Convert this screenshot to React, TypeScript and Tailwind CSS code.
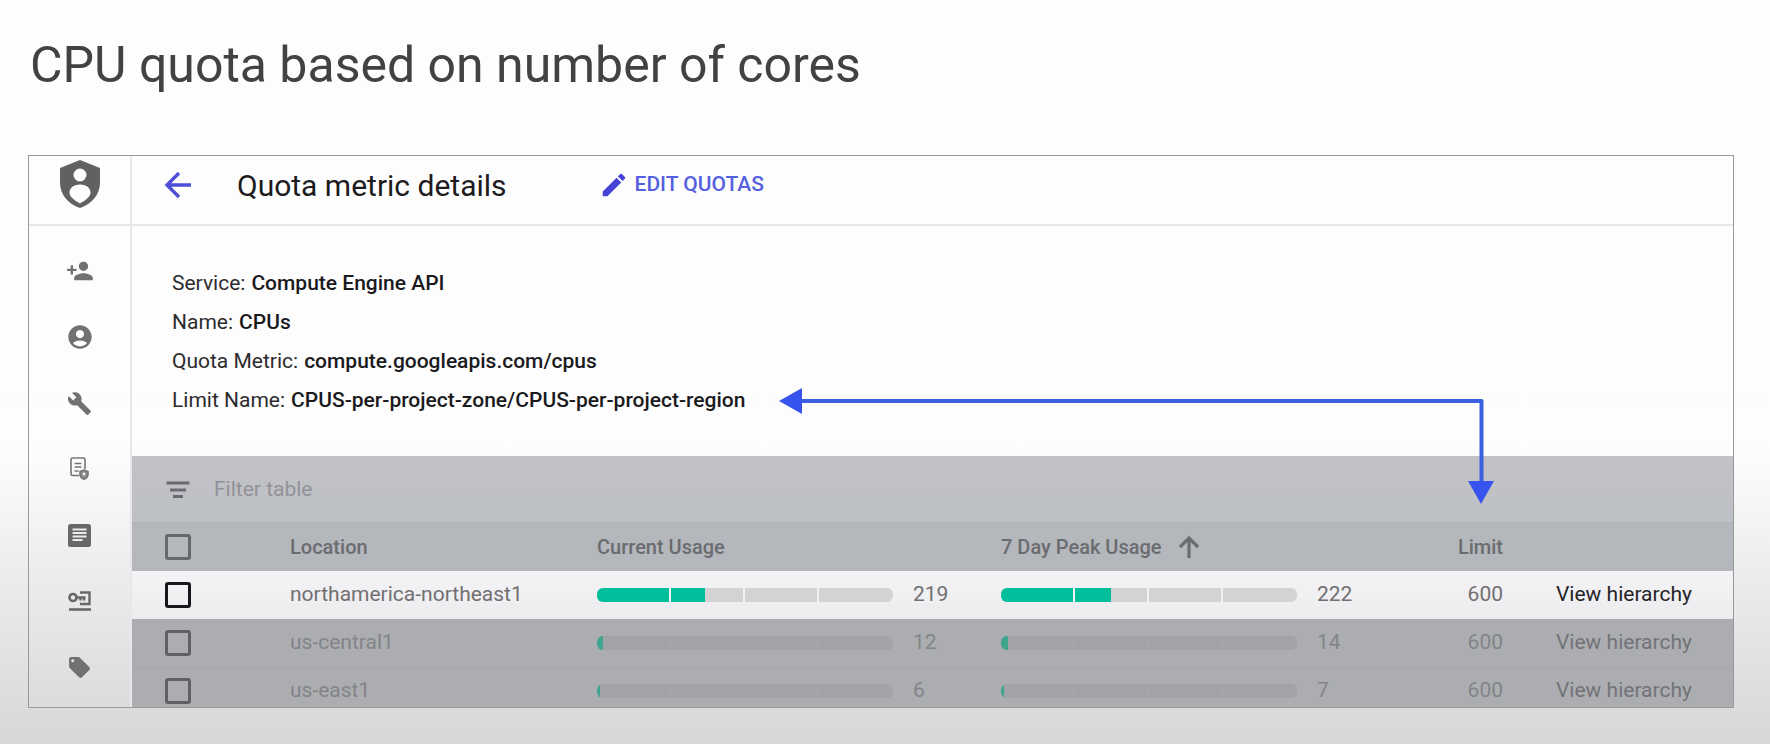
import type { ReactNode } from "react";
import { MdAccountCircle, MdBuild, MdEdit, MdLocalOffer, MdPersonAdd } from "react-icons/md";

function ShieldIcon() {
  return (
    <svg width="40" height="48" viewBox="0 0 40 48" aria-hidden="true">
      <path fill="#616063" fillRule="evenodd" d="M20 0 40 8V23C40 34 32 44 20 48 8 44 0 34 0 23V8ZM20 8.500a6.500 6.500 0 1 0 0 13 6.500 6.500 0 0 0 0-13ZM20 24.500C13 24.500 9.500 28.500 9.500 32.500 9.500 37 15 40.500 20 43.500 25 40.500 30.500 37 30.500 32.500 30.500 28.500 27 24.500 20 24.500Z" />
    </svg>
  );
}

function PolicyIcon() {
  return (
    <svg width="20" height="24" viewBox="0 0 20 24" fill="none" stroke="#757477" strokeWidth="1.600" aria-hidden="true">
      <path d="M9 18.500H2.500a1.500 1.500 0 0 1-1.500-1.500V2.500A1.500 1.500 0 0 1 2.500 1h11A1.500 1.500 0 0 1 15 2.500V12" />
      <path d="M4.500 6.500h7M4.500 10h7M4.500 14h4" />
      <path d="M14 13l4 1.500v3c0 2.200-1.700 3.800-4 4.700-2.300-.9-4-2.500-4-4.700v-3z" fill="#8b8a8d" />
      <circle cx="14" cy="17" r="1.400" fill="#eee" stroke="none" />
    </svg>
  );
}

function NotesIcon() {
  return (
    <svg width="23" height="23" viewBox="0 0 23 23" aria-hidden="true">
      <rect width="23" height="23" rx="2.500" fill="#68676a" />
      <path d="M4.500 5.500h14M4.500 9h14M4.500 12.500h14M4.500 16h10" stroke="#ececee" strokeWidth="1.800" />
    </svg>
  );
}

function KeyIcon() {
  return (
    <svg width="23" height="20" viewBox="0 0 23 20" fill="none" stroke="#69686b" aria-hidden="true">
      <circle cx="5" cy="6.500" r="3.500" strokeWidth="2.600" />
      <path d="M8 6.500h9.500M12.500 6.500v3M16 6.500v3" strokeWidth="2.400" />
      <path d="M12 1.500h9.500v11.500h-9.500" strokeWidth="2.400" />
      <path d="M1 18.500h22" strokeWidth="2.600" />
    </svg>
  );
}

function BackIcon() {
  return (
    <svg width="28" height="28" viewBox="0 0 28 28" fill="none" stroke="currentColor" strokeWidth="3.400" aria-hidden="true">
      <path d="M27 14H3.500M15 2 3 14 15 26" />
    </svg>
  );
}

function SortIcon() {
  return (
    <svg width="22" height="24" viewBox="0 0 22 24" fill="none" stroke="currentColor" strokeWidth="3.200" aria-hidden="true">
      <path d="M11 23V3M2 12 11 3 20 12" />
    </svg>
  );
}

function FilterIcon() {
  return (
    <svg width="24" height="18" viewBox="0 0 24 18" fill="none" stroke="#6a6b72" strokeWidth="3.200" aria-hidden="true">
      <path d="M0.500 2H23.500M4 9H20M7 15.500H17" />
    </svg>
  );
}

const navItems: { label: string; icon: ReactNode }[] = [
  { label: "Add member", icon: <MdPersonAdd size={28} /> },
  { label: "Identity", icon: <MdAccountCircle size={28} /> },
  { label: "Tools", icon: <MdBuild size={25} /> },
  { label: "Policies", icon: <PolicyIcon /> },
  { label: "Quotas", icon: <NotesIcon /> },
  { label: "Service accounts", icon: <KeyIcon /> },
  { label: "Labels", icon: <MdLocalOffer size={25} /> },
];

const details = [
  ["Service:", "Compute Engine API"],
  ["Name:", "CPUs"],
  ["Quota Metric:", "compute.googleapis.com/cpus"],
  ["Limit Name:", "CPUS-per-project-zone/CPUS-per-project-region"],
];

const rows = [
  { location: "northamerica-northeast1", current: 219, peak: 222, limit: 600, active: true },
  { location: "us-central1", current: 12, peak: 14, limit: 600, active: false },
  { location: "us-east1", current: 6, peak: 7, limit: 600, active: false },
];

function Usage({ value, limit, active }: { value: number; limit: number; active: boolean }) {
  return (
    <div className="flex items-center gap-5">
      <div className={`relative h-3.5 w-[296px] overflow-hidden rounded-md ${active ? "bg-[#d4d2d5]" : "bg-[#a2a3a8]"}`}>
        <div
          className={`h-full ${active ? "bg-[#00bf9a]" : "bg-[#3fa58e]"}`}
          style={{ width: `${(value / limit) * 100}%` }}
        />
        <div className={`absolute inset-0 grid grid-cols-4 divide-x-2 ${active ? "divide-[#f1f0f2]" : "divide-[#a5a6ab]"}`}>
          <span /><span /><span /><span />
        </div>
      </div>
      <span>{value}</span>
    </div>
  );
}

function Check({ label, className }: { label: string; className: string }) {
  return (
    <input
      type="checkbox"
      aria-label={label}
      className={`block size-[26px] appearance-none rounded-[3px] border-3 ${className}`}
    />
  );
}

export default function App() {
  return (
    <div className="min-h-screen bg-linear-to-b from-[#fdfdfd] from-60% to-[#d7d7d7] px-7 pb-9 font-['Roboto',sans-serif]">
      <h1 className="pt-[33px] pb-[58px] pl-0.5 text-[50px] leading-16 text-[#424144]">CPU quota based on number of cores</h1>

      <div className="relative mr-2 flex h-[553px] overflow-hidden border border-[#99989b]">
        <nav className="flex w-[103px] shrink-0 flex-col border-r-2 border-[#e8e6ea] text-[#717073]">
          <div className="flex h-[70px] shrink-0 justify-center border-b-2 border-[#e8e6ea] pt-1">
            <ShieldIcon />
          </div>
          <div className="flex flex-col pt-3">
            {navItems.map((item) => (
              <button key={item.label} aria-label={item.label} className="flex h-[66px] items-center justify-center">
                {item.icon}
              </button>
            ))}
          </div>
        </nav>

        <main className="min-w-0 flex-1">
          <header className="flex h-[70px] items-center border-b-2 border-[#e8e6ea] pb-2.5 pl-8">
            <button aria-label="Back" className="text-[#4d4fd8]">
              <BackIcon />
            </button>
            <h2 className="ml-[45px] text-[30px] text-[#1c1b1e]">Quota metric details</h2>
            <button className="ml-[92px] flex items-center gap-1.5 text-[21px] font-medium text-[#5560e0]">
              <MdEdit size={30} className="text-[#4544d6]" />
              EDIT QUOTAS
            </button>
          </header>

          <dl className="pt-[38px] pb-9 pl-10 text-[21px] leading-[39px] text-[#2c2b2e]">
            {details.map(([term, value]) => (
              <div key={term} className="flex gap-1.5">
                <dt>{term}</dt>
                <dd className="font-medium text-[#1b1a1d]">{value}</dd>
              </div>
            ))}
          </dl>

          <section>
            <label className="flex h-[67px] items-center gap-6 border-b border-[#b0b1b6] bg-linear-to-b from-[#c2c2c6] to-[#bdc0c5] pt-0.5 pl-[34px]">
              <FilterIcon />
              <input
                aria-label="Filter table"
                placeholder="Filter table"
                className="w-96 bg-transparent text-[21px] outline-none placeholder:text-[#929298]"
              />
            </label>
            <table className="w-full table-fixed text-left text-[21px]">
              <colgroup>
                <col className="w-[158px]" />
                <col className="w-[307px]" />
                <col className="w-[404px]" />
                <col className="w-[404px]" />
                <col className="w-[98px]" />
                <col />
              </colgroup>
              <thead>
                <tr className="h-12 bg-[#b4b7bc] text-xl text-[#6b6c70]">
                  <th className="pl-[33px]"><Check label="Select all" className="border-[#66676c]" /></th>
                  <th className="font-medium">Location</th>
                  <th className="font-medium">Current Usage</th>
                  <th className="font-medium">
                    <span className="flex items-center gap-4">
                      7 Day Peak Usage <SortIcon />
                    </span>
                  </th>
                  <th className="text-right font-medium">Limit</th>
                  <th />
                </tr>
              </thead>
              <tbody>
                {rows.map((row) => (
                  <tr
                    key={row.location}
                    className={
                      row.active
                        ? "h-12 bg-linear-to-b from-[#f4f3f5] to-[#ecebed] text-[#716f72]"
                        : "h-12 border-b border-[#a6a7ab] bg-[#acadb1] text-[#838488]"
                    }
                  >
                    <td className="pl-[33px]">
                      <Check label={row.location} className={row.active ? "border-[#17161a]" : "border-[#606165]"} />
                    </td>
                    <td>{row.location}</td>
                    <td><Usage value={row.current} limit={row.limit} active={row.active} /></td>
                    <td><Usage value={row.peak} limit={row.limit} active={row.active} /></td>
                    <td className="text-right">{row.limit}</td>
                    <td className="pl-[53px]">
                      <a href="#hierarchy" className={row.active ? "text-[#252427]" : "text-[#727377]"}>View hierarchy</a>
                    </td>
                  </tr>
                ))}
              </tbody>
            </table>
          </section>
        </main>

        <svg className="pointer-events-none absolute top-[231px] left-[750px]" width="720" height="120" viewBox="0 0 720 120" aria-hidden="true">
          <path d="M20 14H702.500V96" fill="none" stroke="#3a60e0" strokeWidth="4" strokeLinejoin="round" />
          <path d="M0 14 23 1V27ZM689 94H715L702 117Z" fill="#3854ee" />
        </svg>
      </div>
    </div>
  );
}
